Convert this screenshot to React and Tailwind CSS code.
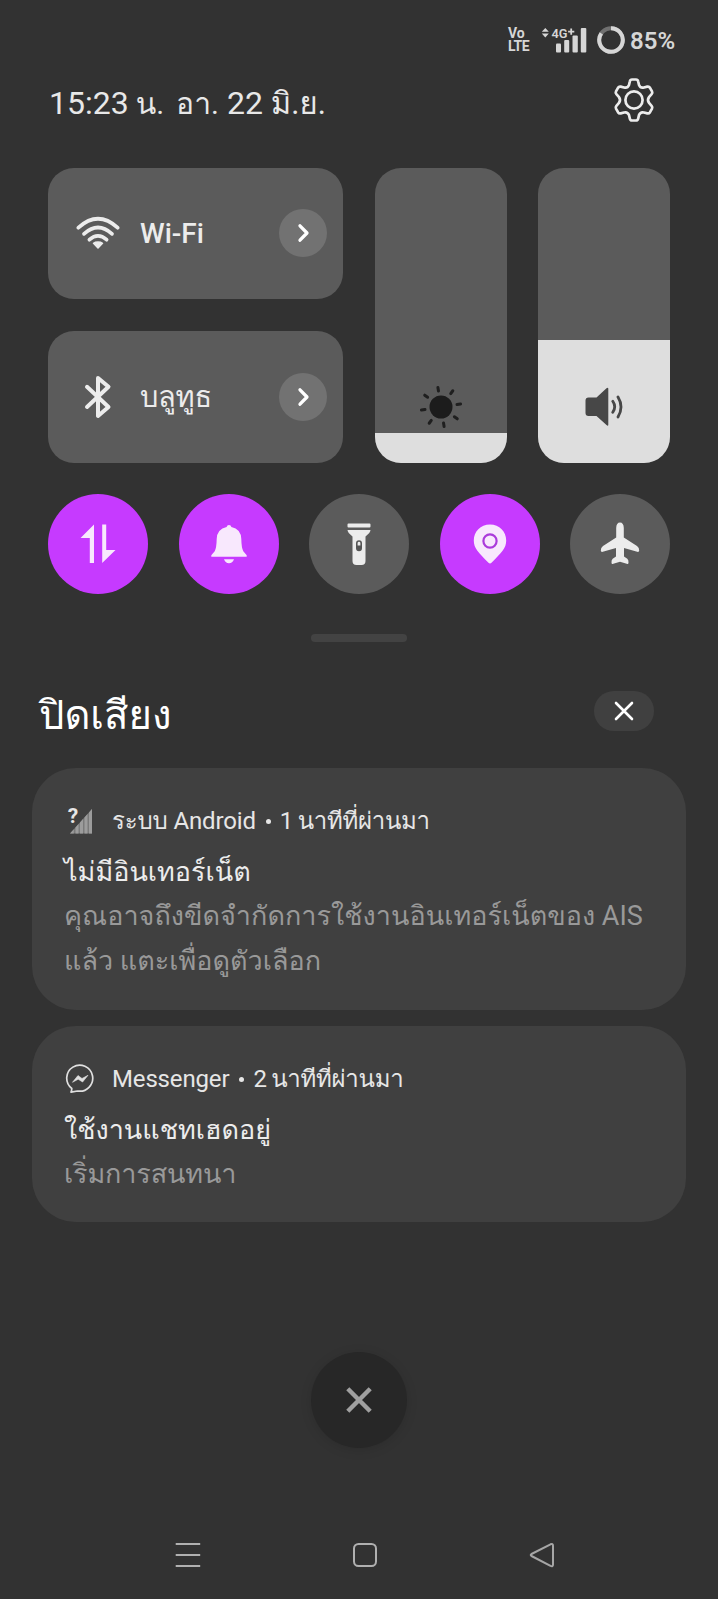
import React from "react";

function StatusBar() {
  return (
    <div className="flex h-[68px] items-start pt-[23px] pl-[508px] text-[#d6d6d6]">
      <div className="mt-[4px] w-[23px] text-[14px] leading-[13px] font-bold">
        <div>Vo</div>
        <div className="tracking-[-0.5px]">LTE</div>
      </div>
      <svg className="ml-[10px] h-[30px] w-[47px] overflow-visible" viewBox="0 -4 47 30" fill="currentColor">
        <path d="M0.8 4.800 4.300 1l3.500 3.800zM0.800 6.600h7L4.300 10.400z" />
        <text x="10.500" y="10.800" fontSize="13.500" fontWeight="600" textLength="16" lengthAdjust="spacingAndGlyphs">4G</text>
        <path d="M29.300 1.500h1.800v2.200h2.200v1.800h-2.200v2.200h-1.800V5.500h-2.200V3.700h2.200z" />
        <rect x="15" y="16.500" width="5" height="9" rx="1" />
        <rect x="23.200" y="13" width="5" height="12.500" rx="1" />
        <rect x="31.500" y="8.500" width="5.300" height="17" rx="1" />
        <rect x="39.800" y="1" width="5.500" height="24.500" rx="1" />
      </svg>
      <svg className="mt-[3px] ml-[9px] h-[28px] w-[28px]" viewBox="0 0 28 28" fill="none" stroke="currentColor" strokeWidth="4">
        <circle cx="14" cy="14" r="11.800" stroke="#707070" />
        <path d="M14 2.200A11.800 11.800 0 1 1 4.300 7.300" />
      </svg>
      <div className="mt-[5px] ml-[5px] text-[24px] leading-[26px] font-semibold">85%</div>
    </div>
  );
}

function Gear() {
  return (
    <svg className="h-[46px] w-[42px]" viewBox="0 0 42 46" fill="none" stroke="#ececec" strokeWidth="2.700" strokeLinejoin="round">
      <path d="M16.800 4.500Q17.200 2.500 19 2.500h4Q24.800 2.500 25.200 4.500L26 8Q27.500 11.500 31 10.500L34.300 9.600Q36 9.200 37 10.800L39 14.300Q39.800 15.800 38.600 17.200L36.200 19.800Q33.800 23 36.200 26.200L38.600 28.800Q39.800 30.200 39 31.700L37 35.200Q36 36.800 34.300 36.400L31 35.500Q27.500 34.500 26 38L25.200 41.500Q24.800 43.500 23 43.500h-4Q17.200 43.500 16.800 41.500L16 38Q14.500 34.500 11 35.500L7.700 36.400Q6 36.800 5 35.200L3 31.700Q2.200 30.200 3.400 28.800L5.800 26.200Q8.200 23 5.800 19.800L3.400 17.200Q2.200 15.800 3 14.300L5 10.800Q6 9.200 7.700 9.600L11 10.500Q14.500 11.500 16 8z" />
      <circle cx="21" cy="23" r="8.600" />
    </svg>
  );
}

function WifiIcon() {
  return (
    <svg className="h-[34px] w-[44px]" viewBox="0 0 44 34" fill="none" stroke="#ececec" strokeWidth="3.700" strokeLinecap="round">
      <path d="M2.400 11.700Q22-6.100 41.600 11.700" />
      <path d="M8 17.900Q22 5.100 36 17.900" />
      <path d="M13.400 23.700Q22 16.100 30.600 23.700" />
      <path d="M22 26q2.800 0 4.500 1.300L22 32l-4.500-4.700Q19.200 26 22 26z" fill="#ececec" strokeWidth="1.500" strokeLinejoin="round" />
    </svg>
  );
}

function BluetoothIcon() {
  return (
    <svg className="h-[44px] w-[44px]" viewBox="0 0 44 44" fill="none" stroke="#ececec" strokeWidth="4" strokeLinecap="round" strokeLinejoin="round">
      <path d="M11 11.800 32.500 32 22 41V3L32.500 11.800 11 32" />
    </svg>
  );
}

function Tile({ icon, label }) {
  return (
    <div className="flex h-[131.500px] w-[295px] items-center rounded-[26px] bg-[#5b5b5b] pr-4 pl-7">
      {icon}
      <div className="ml-5 flex-1">{label}</div>
      <div className="flex h-12 w-12 items-center justify-center rounded-full bg-[#727272]">
        <svg className="h-5 w-5" viewBox="0 0 20 20" fill="none" stroke="#fff" strokeWidth="3.300" strokeLinecap="round" strokeLinejoin="round">
          <path d="M7 2.800 14 10 7 17.200" />
        </svg>
      </div>
    </div>
  );
}

function SunIcon() {
  return (
    <svg className="h-[46px] w-[46px]" viewBox="-23 -23 46 46">
      <circle r="11.500" fill="#1c1c1c" />
      <g stroke="#1f1f1f" strokeWidth="3" strokeLinecap="round" transform="rotate(-9)">
        <path d="M0-16.200v-3.600M0 16.200v3.600M16.200 0h3.600M-16.200 0h-3.600M11.700 11.700l2.500 2.500M-11.700-11.700l-2.500-2.500M11.700-11.700l2.500-2.500M-11.700 11.700l-2.500 2.500" />
      </g>
    </svg>
  );
}

function SpeakerIcon() {
  return (
    <svg className="h-[40px] w-[40px]" viewBox="0 0 40 40">
      <path d="M1.500 13.500q0-3 3-3h8L22.500 1.300q1.800-1.500 1.800.6v35.600q0 2.100-1.800.6L12.500 29h-8q-3 0-3-3z" fill="#474747" />
      <path d="M28.800 14.300q3.800 5.400 0 11M34 10q6 9.800 0 20" fill="none" stroke="#474747" strokeWidth="2.800" strokeLinecap="round" />
    </svg>
  );
}

function Slider({ icon, fill }) {
  return (
    <div className="relative flex h-[295px] w-[132px] flex-col justify-end overflow-hidden rounded-[26px] bg-[#5b5b5b]">
      <div className={fill} />
      <div className="absolute inset-x-0 bottom-[33px] flex h-[46px] items-center justify-center">{icon}</div>
    </div>
  );
}

function Toggle({ on, children }) {
  return (
    <div className={on ? "flex h-[100px] w-[100px] items-center justify-center rounded-full bg-[#c63aff]" : "flex h-[100px] w-[100px] items-center justify-center rounded-full bg-[#5b5b5b]"}>
      <svg className="h-[44px] w-[44px]" viewBox="0 0 44 44" fill={on ? "#f8e8fd" : "#ececec"}>
        {children}
      </svg>
    </div>
  );
}

function Card({ icon, app, time, title, children, className }) {
  return (
    <div className={className}>
      <div className="flex h-[30px] items-center text-[#e6e6e6]">
        <div className="w-[48px]">{icon}</div>
        <div className="text-[24px] leading-[30px] tracking-[-0.15px] whitespace-pre">{app}</div>
        <div className="mr-[9px] ml-[10px] h-[5px] w-[5px] rounded-full bg-[#e6e6e6]" />
        <div className="text-[24px] leading-[30px] tracking-[-0.3px] whitespace-pre [word-spacing:-1px]">{time}</div>
      </div>
      <div className="mt-[14px] h-[44px] text-[27px] leading-[44px] whitespace-pre text-[#ececec]">{title}</div>
      <div className="text-[27px] leading-[45px] text-[#999]">{children}</div>
    </div>
  );
}

export default function App() {
  return (
    <div className="flex h-[1599px] w-[718px] flex-col overflow-hidden bg-[#323232] font-['Roboto','Loma',sans-serif]">
      <StatusBar />
      <div className="flex h-[99.500px] items-start justify-between pr-[63px] pl-[49px]">
        <div className="mt-[14.500px] flex items-baseline text-[32px] leading-[40px] whitespace-pre text-[#e8e8e8]">
          <span>15:23</span>
          <span className="ml-[7px] text-[30px]">น.</span>
          <span className="ml-[12px] text-[30px]">อา.</span>
          <span className="ml-[8px]">22</span>
          <span className="ml-[8px] text-[31px]">มิ.ย.</span>
        </div>
        <div className="mt-[9px]"><Gear /></div>
      </div>
      <div className="flex h-[295px] justify-between px-[48px]">
        <div className="flex flex-col justify-between">
          <Tile icon={<WifiIcon />} label={<div className="mt-[2px] text-[28px] leading-[36px] font-medium text-[#ececec]">Wi-Fi</div>} />
          <Tile icon={<BluetoothIcon />} label={<div className="text-[29px] leading-[40px] tracking-[-0.3px] text-[#ececec]">บลูทูธ</div>} />
        </div>
        <Slider icon={<SunIcon />} fill="h-[30px] bg-[#dedede]" />
        <Slider icon={<SpeakerIcon />} fill="h-[122.500px] bg-[#dedede]" />
      </div>
      <div className="mt-[31.500px] flex justify-between px-[48px]">
        <Toggle on>
          <path d="M18 2.500V41H13.800V16H4.500zM26.200 2.500h4V28H39.500L26.200 41z" />
        </Toggle>
        <Toggle on>
          <path d="M22 3q2 0 2.400 2Q34 7 34.300 17q.2 9 2 12.300l3 3.500q1.500 2-.8 2h-33q-2.300 0-.8-2l3-3.500q1.800-3.300 2-12.300Q10 7 19.600 5 20 3 22 3zM17 37.300h10q-1.500 4-5 4t-5-4z" />
        </Toggle>
        <Toggle>
          <path d="M11.500 1.500h21q1 0 1 1v2q0 1-1 1h-21q-1 0-1-1v-2q0-1 1-1zM10.500 8h23q0 2.500-5 6.500V39q0 4-4 4h-5q-4 0-4-4V14.500Q10.500 10.500 10.500 8z" />
          <rect x="19.800" y="19" width="4.400" height="9.500" rx="2.200" fill="none" stroke="#555" strokeWidth="1.600" />
          <path d="M20 23.500h4v3q0 2-2 2t-2-2z" fill="#555" />
        </Toggle>
        <Toggle on>
          <path d="M22 2.500C12.500 2.500 5.800 9.500 5.800 18.500c0 8 4.700 12 14.700 22.200q1.500 1.500 3 0C33.500 30.500 38.200 26.500 38.200 18.500 38.200 9.500 31.500 2.500 22 2.500z" />
          <circle cx="22" cy="19" r="6.600" fill="none" stroke="#ab3bdb" strokeWidth="2.200" />
        </Toggle>
        <Toggle>
          <path d="M22 .5q3.600 0 3.800 5.500v9.500L39 24q2.700 2 2.200 4.800-.2 1.500-2 1L26 26v8.500l3.300 2.200q1.500 1.500 1.200 4.300-.2 1.300-1.800.7L22 39.700l-6.700 2q-1.600.6-1.800-.7-.3-2.800 1.200-4.300l3.300-2.200V26L4.800 29.800q-1.800.5-2-1Q2.300 26 5 24l13.200-8.500V6Q18.400.5 22 .5z" />
        </Toggle>
      </div>
      <div className="mt-[40px] ml-[311px] h-[8px] w-[96px] rounded-full bg-[#434343]" />
      <div className="mt-[40px] flex h-[86px] justify-between pr-[64px] pl-[39px]">
        <div className="mt-[9px] text-[40px] leading-[50px] whitespace-pre text-white">ปิดเสียง</div>
        <div className="mt-[9px] flex h-[40px] w-[60px] items-center justify-center rounded-full bg-[#404040]">
          <svg className="h-5 w-5" viewBox="0 0 20 20" stroke="#fff" strokeWidth="2.600" strokeLinecap="round">
            <path d="M2 2 18 18M18 2 2 18" />
          </svg>
        </div>
      </div>
      <Card
        className="mx-[32px] h-[242px] rounded-[44px] bg-[#404040] px-[32px] pt-[38px]"
        app="ระบบ Android"
        time="1 นาทีที่ผ่านมา"
        title="ไม่มีอินเทอร์เน็ต"
        icon={
          <svg className="-mt-[6px] h-[36px] w-[30px] overflow-visible" viewBox="0 -6 30 36">
            <path d="M6 27.500 28 3V27.500z" fill="#7a7a7a" />
            <path d="M6 27.500 9.800 23.300V27.500zM11.500 27.500V21.400L14.500 18V27.500zM16 27.500V16.400L19 13V27.500zM20.500 27.500V11.400L23.500 8V27.500zM25 27.500V6.400L28 3V27.500z" fill="#9c9c9c" />
            <text x="3.800" y="17" fontSize="21" fontWeight="700" fill="#e6e6e6" stroke="#404040" strokeWidth="1.500" paintOrder="stroke">?</text>
          </svg>
        }
      >
        <div className="tracking-[0.020px] whitespace-pre">คุณอาจถึงขีดจำกัดการใช้งานอินเทอร์เน็ตของ AIS</div>
        <div className="whitespace-pre">แล้ว แตะเพื่อดูตัวเลือก</div>
      </Card>
      <Card
        className="mx-[32px] mt-[16px] h-[196px] rounded-[44px] bg-[#404040] px-[32px] pt-[38px]"
        app="Messenger"
        time="2 นาทีที่ผ่านมา"
        title="ใช้งานแชทเฮดอยู่"
        icon={
          <svg className="ml-px h-[30px] w-[30px]" viewBox="0 0 30 30">
            <path d="M6.800 24.500A13 13 0 1 1 12.500 27L6 28.200Q6.800 26.500 6.800 24.500z" fill="none" stroke="#e0e0e0" strokeWidth="1.700" strokeLinejoin="round" />
            <path d="M7.500 18.300 13 11.500 17 14.500 23 11.300 17.600 18 13.200 15.200z" fill="#e0e0e0" stroke="#e0e0e0" strokeWidth="0.600" strokeLinejoin="round" />
          </svg>
        }
      >
        <div className="tracking-[-0.150px] whitespace-pre">เริ่มการสนทนา</div>
      </Card>
      <div className="mt-[130px] ml-[311px] flex h-[96px] w-[96px] items-center justify-center rounded-full bg-[#272727] shadow-[0_2px_12px_rgba(0,0,0,0.12)]">
        <svg className="h-[28px] w-[28px]" viewBox="0 0 28 28" stroke="#a0a0a0" strokeWidth="4.400">
          <path d="M2.800 2.800 25.200 25.200M25.200 2.800 2.800 25.200" />
        </svg>
      </div>
      <div className="mt-[92px] flex h-[30px] items-center pl-[173px]">
        <svg className="h-[30px] w-[30px]" viewBox="0 0 30 30" stroke="#b0b0b0" strokeWidth="2">
          <path d="M2.700 4h24.500M2.700 15h24.500M2.700 26h24.500" />
        </svg>
        <svg className="ml-[147px] h-[30px] w-[30px]" viewBox="0 0 30 30" fill="none" stroke="#b0b0b0" strokeWidth="2">
          <rect x="4" y="4" width="22" height="22" rx="4.500" />
        </svg>
        <svg className="ml-[147px] h-[30px] w-[30px]" viewBox="0 0 30 30" fill="none" stroke="#a6a6a6" strokeWidth="2" strokeLinejoin="round">
          <path d="M4.500 14 23.500 4.300q2.500-1 2.500 1.500v18.600q0 2.500-2.500 1.500L4.500 16q-1.500-1 0-2z" />
        </svg>
      </div>
    </div>
  );
}
